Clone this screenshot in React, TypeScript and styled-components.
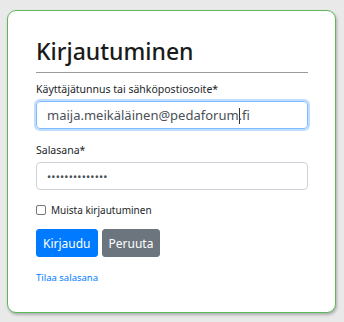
import React from 'react';
import styled, { createGlobalStyle } from 'styled-components';

const GlobalStyle = createGlobalStyle`
    html, body {
        margin: 0;
        padding: 0;
        background: #e9e9e9;
    }

    body {
        font-family: "Noto Sans", "Open Sans", sans-serif;
        color: #212529;
    }
`;

const Page = styled.div`
    width: 344px;
    height: 322px;
    padding: 10px 8px 9px 7px;
    box-sizing: border-box;
`;

const Card = styled.form`
    height: 100%;
    box-sizing: border-box;
    background: #fff;
    border: 1.5px solid #5cb85c;
    border-radius: 9px;
    box-shadow: 1px 2px 3px rgba(0, 0, 0, 0.25);
    padding: 24px 27px 0 28px;
`;

const Title = styled.h1`
    margin: 0;
    padding-bottom: 5px;
    font-size: 23px;
    font-weight: 500;
    line-height: 32px;
    color: #1a1a1a;
    border-bottom: 1px solid #9a9a9a;
`;

const Field = styled.div<{ $top: number }>`
    display: flex;
    flex-direction: column;
    margin-top: ${(p) => p.$top}px;
`;

const Label = styled.label`
    font-size: 10.5px;
    line-height: 14px;
    margin-bottom: 5px;
`;

const Input = styled.div<{ $focused?: boolean }>`
    height: 28px;
    box-sizing: border-box;
    display: flex;
    align-items: center;
    padding: 0 10px;
    font-size: 13px;
    color: #495057;
    border-radius: 4px;
    border: 1px solid ${(p) => (p.$focused ? '#80bdff' : '#ced4da')};
    box-shadow: ${(p) => (p.$focused ? '0 0 0 2px rgba(0, 123, 255, 0.25)' : 'none')};
`;

const Caret = styled.span`
    display: inline-block;
    width: 1px;
    height: 16px;
    background: #333;
    vertical-align: middle;
    margin: 0 -1px 0 0;
`;

const Dots = styled.span`
    font-size: 11px;
    letter-spacing: 0.2px;
    color: #495057;
`;

const CheckRow = styled.label`
    display: flex;
    align-items: center;
    gap: 5px;
    margin-top: 13px;
    font-size: 10px;
    line-height: 14px;
`;

const Box = styled.span`
    width: 10px;
    height: 10px;
    border: 1px solid #767676;
    border-radius: 2px;
    box-sizing: border-box;
`;

const Buttons = styled.div`
    display: flex;
    gap: 4px;
    margin-top: 12px;
`;

const Button = styled.button<{ $variant: 'primary' | 'secondary' }>`
    height: 28px;
    padding: 0 6px;
    font-family: inherit;
    font-size: 12px;
    color: #fff;
    border: 1px solid ${(p) => (p.$variant === 'primary' ? '#007bff' : '#6c757d')};
    background: ${(p) => (p.$variant === 'primary' ? '#007bff' : '#6c757d')};
    border-radius: 3px;
`;

const LinkText = styled.a`
    display: block;
    margin-top: 14px;
    font-size: 9.5px;
    color: #007bff;
    text-decoration: none;
`;

const App: React.FC = () => {
    return (
        <Page>
            <GlobalStyle />
            <Card>
                <Title>Kirjautuminen</Title>
                <Field $top={9}>
                    <Label>Käyttäjätunnus tai sähköpostiosoite*</Label>
                    <Input $focused>
                        <span>
                            maija.meikäläinen@pedaforum<Caret />.fi
                        </span>
                    </Input>
                </Field>
                <Field $top={14}>
                    <Label>Salasana*</Label>
                    <Input>
                        <Dots>••••••••••••••</Dots>
                    </Input>
                </Field>
                <CheckRow>
                    <Box />
                    Muista kirjautuminen
                </CheckRow>
                <Buttons>
                    <Button type="button" $variant="primary">Kirjaudu</Button>
                    <Button type="button" $variant="secondary">Peruuta</Button>
                </Buttons>
                <LinkText href="#">Tilaa salasana</LinkText>
            </Card>
        </Page>
    );
}

export default App;
